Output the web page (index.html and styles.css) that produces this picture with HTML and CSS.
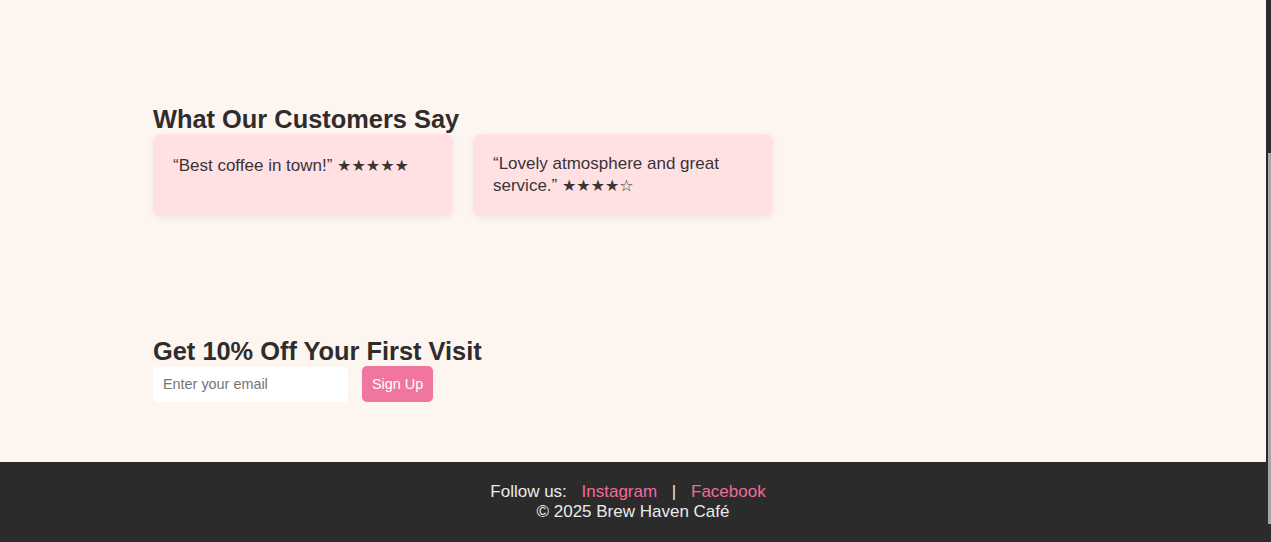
FILE: index.html
```html
<!DOCTYPE html>
<html lang="en">
<head>
<meta charset="utf-8">
<title>Brew Haven Café</title>
<link rel="stylesheet" href="styles.css">
</head>
<body>
<main class="page">
  <section class="section section-reviews">
    <div class="container">
      <h2 class="section-title">What Our Customers Say</h2>
      <div class="reviews">
        <div class="review-card">“Best coffee in town!” <span class="stars">★★★★★</span></div>
        <div class="review-card">“Lovely atmosphere and great service.” <span class="stars">★★★★☆</span></div>
      </div>
    </div>
  </section>
  <section class="section section-signup">
    <div class="container">
      <h2 class="section-title">Get 10% Off Your First Visit</h2>
      <form class="signup-form">
        <input class="signup-input" type="email" placeholder="Enter your email">
        <button class="signup-button" type="button">Sign Up</button>
      </form>
    </div>
  </section>
  <footer class="site-footer">
    <p class="footer-line">Follow us: <a class="footer-link" href="#">Instagram</a> | <a class="footer-link" href="#">Facebook</a></p>
    <p class="footer-line">© 2025 Brew Haven Café</p>
  </footer>
</main>
<div class="scrollbar"><div class="scrollbar-thumb"></div></div>
</body>
</html>
```

FILE: styles.css
```css
html, body {
  margin: 0;
  padding: 0;
}

body {
  background: #fdf5f0;
  color: #333;
  font-family: "Liberation Sans", Arial, "DejaVu Sans", sans-serif;
  padding-right: 5px;
  overflow: hidden;
}

.container {
  width: 960px;
  margin: 0 auto;
}

.section {
  padding: 60px 0;
}

.section-reviews {
  padding-top: 104px;
}

.section-title {
  margin: 0;
  font-size: 25.4px;
  line-height: 30px;
  font-weight: bold;
  color: #302c2c;
}

.reviews {
  display: flex;
  gap: 20px;
}

.review-card {
  flex: 0 0 300px;
  box-sizing: border-box;
  padding: 20px;
  background: #ffe1e4;
  border-radius: 8px;
  box-shadow: 0 2px 6px rgba(0, 0, 0, 0.06);
  font-size: 17px;
  line-height: normal;
  color: #3a3434;
}

.stars {
  display: inline-block;
  padding-top: 1.5px;
  font-size: 16px;
  line-height: normal;
}

.signup-form {
  display: flex;
  align-items: flex-end;
  gap: 14px;
  margin: 0;
}

.signup-input {
  box-sizing: border-box;
  width: 195px;
  height: 35px;
  padding: 0 10px;
  border: none;
  border-radius: 4px;
  background: #fff;
  font-family: inherit;
  font-size: 14.4px;
  color: #333;
  outline: none;
}

.signup-input::placeholder {
  color: #757575;
}

.signup-button {
  box-sizing: border-box;
  height: 36px;
  padding: 0 10px;
  border: none;
  border-radius: 5px;
  background: #f0769e;
  color: #fff;
  font-family: inherit;
  font-size: 14.4px;
  line-height: 16px;
  cursor: pointer;
}

.site-footer {
  background: #2b2b2b;
  color: #eaeaea;
  text-align: center;
  padding: 20px;
  font-size: 17px;
  line-height: 20px;
}

.footer-line {
  margin: 0;
}

.footer-link {
  color: #f06b99;
  text-decoration: none;
  margin: 0 10px;
}

.scrollbar {
  position: fixed;
  top: 0;
  right: 0;
  width: 5px;
  height: 100%;
  background: #2b2b2b;
}

.scrollbar-thumb {
  position: absolute;
  top: 153px;
  bottom: 18px;
  right: 0;
  width: 3px;
  background: #a6a6a6;
}
```
